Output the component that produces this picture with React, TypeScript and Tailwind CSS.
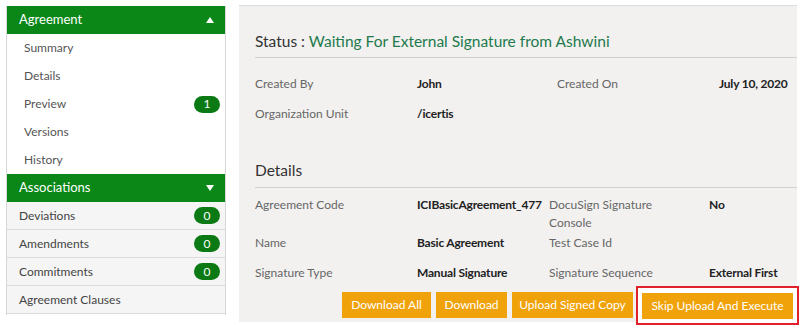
const font = { fontFamily: "Lato, 'Open Sans', sans-serif" };

function Badge({ n }: { n: number }) {
  return (
    <span className="flex h-[17px] w-[26px] items-center justify-center rounded-full bg-[#0b7a14] text-[12px] leading-none text-white">
      {n}
    </span>
  );
}

function Caret({ up }: { up?: boolean }) {
  return (
    <svg width="8" height="6" viewBox="0 0 8 6" className="mr-[11px]">
      <path d={up ? "M0 6 L4 0 L8 6 Z" : "M0 0 L8 0 L4 6 Z"} fill="#ffffff" />
    </svg>
  );
}

function SectionHeader({ title, up }: { title: string; up?: boolean }) {
  return (
    <div className="flex h-[28px] items-center justify-between bg-[#0a8717] pl-[12px] text-[13px] text-white">
      <span>{title}</span>
      <Caret up={up} />
    </div>
  );
}

const agreementItems: { label: string; badge?: number }[] = [
  { label: "Summary" },
  { label: "Details" },
  { label: "Preview", badge: 1 },
  { label: "Versions" },
  { label: "History" },
];

const associationItems: { label: string; badge?: number }[] = [
  { label: "Deviations", badge: 0 },
  { label: "Amendments", badge: 0 },
  { label: "Commitments", badge: 0 },
  { label: "Agreement Clauses" },
];

function Sidebar() {
  return (
    <aside className="mt-[6px] ml-[6px] h-[309px] w-[220px] shrink-0 border-x border-[#d6d6d6] bg-white">
      <SectionHeader title="Agreement" up />
      {agreementItems.map((it) => (
        <div
          key={it.label}
          className="flex h-[28px] items-center justify-between pr-[5px] pl-[17px] text-[12px] text-[#555]"
        >
          <span>{it.label}</span>
          {it.badge !== undefined && <Badge n={it.badge} />}
        </div>
      ))}
      <SectionHeader title="Associations" />
      {associationItems.map((it) => (
        <div
          key={it.label}
          className="flex h-[28px] items-center justify-between border-b border-[#dcdcdc] bg-[#f5f5f5] pr-[5px] pl-[12px] text-[12px] text-[#444]"
        >
          <span>{it.label}</span>
          {it.badge !== undefined && <Badge n={it.badge} />}
        </div>
      ))}
    </aside>
  );
}

// label + bold value pair, widths fixed per column
function Field({
  label,
  value,
  labelW,
  valueW,
}: {
  label: string;
  value: string;
  labelW: string;
  valueW: string;
}) {
  return (
    <>
      <span className={`${labelW} shrink-0 text-[#666]`}>{label}</span>
      <span className={`${valueW} shrink-0 font-bold tracking-[-0.2px] text-[#222]`}>{value}</span>
    </>
  );
}

function Btn({ children, w }: { children: string; w: string }) {
  return (
    <button
      type="button"
      className={`${w} h-[26px] bg-[#f0a20b] text-center text-[12px] text-white`}
    >
      {children}
    </button>
  );
}

export default function App() {
  return (
    <div className="flex h-[325px] w-[800px] overflow-hidden bg-white" style={font}>
      <Sidebar />
      <main className="mt-[5px] ml-[13px] flex h-[317px] w-[558px] shrink-0 flex-col border-t border-[#dcdcdc] bg-[#f2f1f0] pl-[16px]">
        <h2 className="shrink-0 border-b border-[#cfcfcf] pt-[24px] pb-[5px] text-[15.5px] leading-[22px] text-[#333]">
          Status :{" "}
          <span className="text-[#237a4c]">Waiting For External Signature from Ashwini</span>
        </h2>

        <div className="mt-[17px] shrink-0 text-[12px] leading-[18px]">
          <div className="flex h-[30px]">
            <Field label="Created By" value="John" labelW="w-[162px]" valueW="w-[140px]" />
            <Field label="Created On" value="July 10, 2020" labelW="w-[162px]" valueW="w-auto" />
          </div>
          <div className="flex h-[30px]">
            <Field label="Organization Unit" value="/icertis" labelW="w-[162px]" valueW="w-[140px]" />
          </div>
        </div>

        <h2 className="mt-[24px] shrink-0 border-b border-[#cfcfcf] pb-[6px] text-[15.5px] leading-[22px] text-[#333]">
          Details
        </h2>

        <div className="mt-[8px] shrink-0 text-[12px] leading-[18px]">
          <div className="flex h-[38px]">
            <Field label="Agreement Code" value="ICIBasicAgreement_477" labelW="w-[162px]" valueW="w-[132px]" />
            <span className="w-[120px] shrink-0 text-[#666]">DocuSign Signature Console</span>
            <span className="ml-[40px] font-bold text-[#222]">No</span>
          </div>
          <div className="flex h-[30px]">
            <Field label="Name" value="Basic Agreement" labelW="w-[162px]" valueW="w-[132px]" />
            <span className="w-[160px] shrink-0 text-[#666]">Test Case Id</span>
          </div>
          <div className="flex h-[22px]">
            <Field label="Signature Type" value="Manual Signature" labelW="w-[162px]" valueW="w-[132px]" />
            <Field label="Signature Sequence" value="External First" labelW="w-[160px]" valueW="w-auto" />
          </div>
        </div>

        <div className="flex h-[38px] shrink-0 items-center justify-end">
          <Btn w="w-[89px]">Download All</Btn>
          <div className="w-[5px]" />
          <Btn w="w-[71px]">Download</Btn>
          <div className="w-[5px]" />
          <Btn w="w-[121px]">Upload Signed Copy</Btn>
          <div className="-mr-[2px] ml-[3px] border-2 border-[#e0202a] bg-white p-[4px]">
            <Btn w="w-[151px]">Skip Upload And Execute</Btn>
          </div>
        </div>
      </main>
    </div>
  );
}
